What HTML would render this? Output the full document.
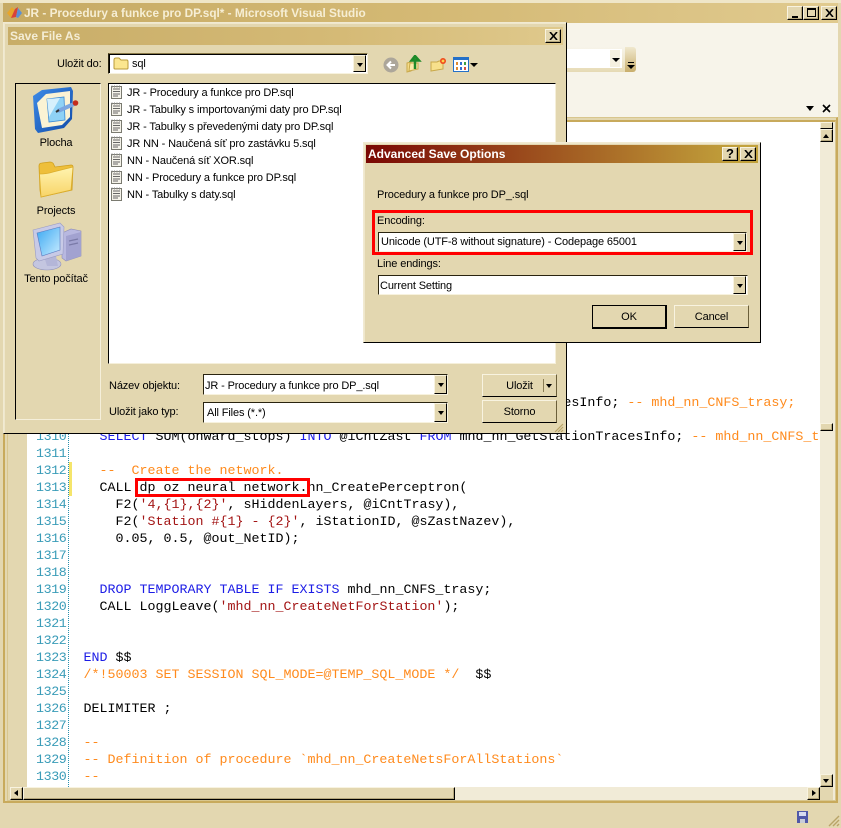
<!DOCTYPE html>
<html><head><meta charset="utf-8"><style>
html,body{margin:0;padding:0;width:841px;height:828px;overflow:hidden;background:#e3d7b0}
div,span,svg{box-sizing:border-box}
.a,.t,.c{position:absolute}
.t{font:11px/16px "Liberation Sans",sans-serif;letter-spacing:-.13px;color:#000;white-space:pre}
.c{font:13.33px/17px "Liberation Mono",monospace;white-space:pre;color:#000;left:83.5px;height:17px;margin-top:1px}
.n{position:absolute;left:36px;font:13.33px/17px "Liberation Mono",monospace;color:#3a9cb8;height:17px;margin-top:1px;letter-spacing:-.4px}
.k{color:#1c1ce6}.o{color:#ff8a1c}.s{color:#a31515}
.btn{position:absolute;background:#e3d7b0;border:1px solid;border-color:#f8f3e0 #000 #000 #f8f3e0;box-shadow:inset -1px -1px 0 #b5a77c}
.combo{position:absolute;background:#fff;border:1px solid;border-color:#2a2410 #f7f2de #f7f2de #2a2410}
.dd{position:absolute;background:#e3d7b0;border:1px solid;border-color:#f8f3e0 #000 #000 #f8f3e0}
.dd:after{content:"";position:absolute;left:3px;top:7px;border:3px solid transparent;border-top:4px solid #000;border-bottom:0}
.pb{position:absolute;background:#e3d7b0;border:1px solid;border-color:#f8f3e0 #6b5f3a #000 #f8f3e0;text-align:center;font:11px/14px "Liberation Sans",sans-serif;letter-spacing:-.13px}
</style></head><body>
<!-- main window -->
<div class="a" style="left:0;top:0;width:841px;height:3px;background:#efe6c8"></div>
<div class="a" style="left:3px;top:3px;width:835px;height:20px;background:linear-gradient(90deg,#c6aa64,#d4b974 50%,#e0ca8f)"></div>
<div class="t" style="left:24px;top:5px;font-size:11.8px;font-weight:bold;color:#f6eed4;letter-spacing:0">JR - Procedury a funkce pro DP.sql* - Microsoft Visual Studio</div>
<svg class="a" style="left:6px;top:6px" width="17" height="14" viewBox="0 0 17 14"><path d="M1 7L6 1L9 4L5 12Z" fill="#e8a52a"/><path d="M5 12L9 3L12 1L10 11Z" fill="#d8433a"/><path d="M10 11L12 2L16 7L12 12Z" fill="#5a8fd6"/></svg>
<div class="btn" style="left:787px;top:6px;width:16px;height:14px"><div class="a" style="left:4px;top:9px;width:6px;height:2px;background:#000"></div></div>
<div class="btn" style="left:803px;top:6px;width:16px;height:14px"><div class="a" style="left:3px;top:1px;width:9px;height:9px;border:1px solid #000;border-top-width:2px"></div></div>
<div class="btn" style="left:821px;top:6px;width:16px;height:14px"><svg class="a" style="left:3px;top:2px" width="9" height="8"><path d="M1 0L8 8M8 0L1 8" stroke="#000" stroke-width="1.6"/></svg></div>
<div class="a" style="left:3px;top:23px;width:835px;height:94px;background:#f7f4ea"></div>
<!-- toolbar remnants -->
<div class="a" style="left:566px;top:47px;width:60px;height:25px;background:linear-gradient(#f7f4ea,#efe7cc 60%,#e6dab4)"></div>
<div class="a" style="left:566px;top:49px;width:56px;height:19px;background:#fff;border:1px solid #fff"></div>
<div class="a" style="left:610px;top:50px;width:11px;height:17px;background:#f5f0e0;border-right:1px solid #fff"></div>
<div class="a" style="left:612px;top:58px;border:4px solid transparent;border-top:4px solid #000;border-bottom:0"></div>
<div class="a" style="left:625px;top:47px;width:11px;height:25px;background:linear-gradient(#f0e8ce,#c9ae6c);border-radius:0 3px 3px 0"></div>
<div class="a" style="left:628px;top:62px;width:6px;height:1px;background:#000"></div>
<div class="a" style="left:627px;top:65px;border:4px solid transparent;border-top:4px solid #000;border-bottom:0"></div>
<div class="a" style="left:806px;top:106px;border:4px solid transparent;border-top:5px solid #000;border-bottom:0"></div>
<svg class="a" style="left:822px;top:104px" width="9" height="9"><path d="M1 1L8 8M8 1L1 8" stroke="#000" stroke-width="1.6"/></svg>
<!-- editor frame -->
<div class="a" style="left:3px;top:117px;width:835px;height:686px;background:#e3d7b0;border:2px solid #c8aa5c;border-top:1px solid #d8c68e;border-left-width:2px"></div>
<div class="a" style="left:7px;top:120px;width:829px;height:681px;background:#e3d7b0;border:1px solid #d8c68e;border-top:2px solid #c8aa5c"></div>
<div class="a" style="left:27px;top:122px;width:793px;height:665px;background:#fff"></div>
<div class="a" style="left:820px;top:122px;width:13px;height:665px;background:#f1ebd7"></div>
<div class="a" style="left:10px;top:787px;width:810px;height:13px;background:#f1ebd7"></div>
<div class="a" style="left:820px;top:787px;width:13px;height:13px;background:#e3d7b0"></div>
<div class="a" style="left:833px;top:122px;width:2px;height:678px;background:#f1ebd7"></div>
<div class="btn" style="left:820px;top:122px;width:13px;height:7px;box-shadow:none"></div>
<div class="btn" style="left:820px;top:129px;width:13px;height:13px"><div class="a" style="left:2px;top:4px;border:3px solid transparent;border-bottom:4px solid #000;border-top:0"></div></div>
<div class="btn" style="left:820px;top:423px;width:13px;height:8px"></div>
<div class="btn" style="left:820px;top:774px;width:13px;height:13px"><div class="a" style="left:2px;top:4px;border:3px solid transparent;border-top:4px solid #000;border-bottom:0"></div></div>
<div class="btn" style="left:10px;top:787px;width:13px;height:13px"><div class="a" style="left:3px;top:2px;border:3px solid transparent;border-right:4px solid #000;border-left:0"></div></div>
<div class="btn" style="left:23px;top:787px;width:432px;height:13px"></div>
<div class="btn" style="left:807px;top:787px;width:13px;height:13px"><div class="a" style="left:4px;top:2px;border:3px solid transparent;border-left:4px solid #000;border-right:0"></div></div>
<!-- gutter -->
<div class="a" style="left:68px;top:122px;width:1px;height:665px;border-left:1px dotted #2b91af"></div>
<div class="a" style="left:69px;top:462px;width:3px;height:34px;background:#f5e56b"></div>
<div class="n" style="top:428px">1310</div><div class="n" style="top:445px">1311</div><div class="n" style="top:462px">1312</div><div class="n" style="top:479px">1313</div><div class="n" style="top:496px">1314</div><div class="n" style="top:513px">1315</div><div class="n" style="top:530px">1316</div><div class="n" style="top:547px">1317</div><div class="n" style="top:564px">1318</div><div class="n" style="top:581px">1319</div><div class="n" style="top:598px">1320</div><div class="n" style="top:615px">1321</div><div class="n" style="top:632px">1322</div><div class="n" style="top:649px">1323</div><div class="n" style="top:666px">1324</div><div class="n" style="top:683px">1325</div><div class="n" style="top:700px">1326</div><div class="n" style="top:717px">1327</div><div class="n" style="top:734px">1328</div><div class="n" style="top:751px">1329</div><div class="n" style="top:768px">1330</div>
<!-- code -->
<div class="c" style="top:394px">  <span class="k">SELECT</span> COUNT(*) <span class="k">INTO</span> @iCntTrasy <span class="k">FROM</span> mhd_nn_GetStationTracesInfo; <span class="o">-- mhd_nn_CNFS_trasy;</span></div>
<div class="c" style="top:428px;width:734px;overflow:hidden">  <span class="k">SELECT</span> SUM(onward_stops) <span class="k">INTO</span> @iCntZast <span class="k">FROM</span> mhd_nn_GetStationTracesInfo; <span class="o">-- mhd_nn_CNFS_trasy;</span></div>
<div class="c o" style="top:462px">  --  Create the network.</div>
<div class="c" style="top:479px">  CALL dp oz neural network.nn_CreatePerceptron(</div>
<div class="c" style="top:496px">    F2(<span class="s">'4,{1},{2}'</span>, sHiddenLayers, @iCntTrasy),</div>
<div class="c" style="top:513px">    F2(<span class="s">'Station #{1} - {2}'</span>, iStationID, @sZastNazev),</div>
<div class="c" style="top:530px">    0.05, 0.5, @out_NetID);</div>
<div class="c" style="top:581px">  <span class="k">DROP TEMPORARY TABLE IF EXISTS</span> mhd_nn_CNFS_trasy;</div>
<div class="c" style="top:598px">  CALL LoggLeave(<span class="s">'mhd_nn_CreateNetForStation'</span>);</div>
<div class="c" style="top:649px"><span class="k">END</span> $$</div>
<div class="c" style="top:666px"><span class="o">/*!50003 SET SESSION SQL_MODE=@TEMP_SQL_MODE */</span>  $$</div>
<div class="c" style="top:700px">DELIMITER ;</div>
<div class="c o" style="top:734px">--</div>
<div class="c o" style="top:751px">-- Definition of procedure `mhd_nn_CreateNetsForAllStations`</div>
<div class="c o" style="top:768px">--</div>
<div class="a" style="left:135px;top:478px;width:175px;height:19px;border:3px solid #f00"></div>
<!-- status bar -->
<svg class="a" style="left:797px;top:811px" width="11" height="12"><rect width="11" height="12" fill="#5058a8"/><rect x="2" y="1" width="7" height="4" fill="#d8dcf0"/><rect x="3" y="8" width="5" height="4" fill="#c8ccd8"/></svg>
<svg class="a" style="left:828px;top:814px" width="12" height="13"><path d="M1 12L11 2M5 12L11 6M9 12L11 10" stroke="#b9a468" stroke-width="1.4"/></svg>
<!-- Save File As dialog -->
<div class="a" style="left:3px;top:22px;width:564px;height:412px;background:#e3d7b0;border:1px solid;border-color:#f1ead2 #000 #000 #f1ead2;box-shadow:inset 1px 1px 0 #efe7cc"></div>
<div class="a" style="left:8px;top:27px;width:555px;height:18px;background:linear-gradient(90deg,#c8ad68,#d5ba76 60%,#dfc98c)"></div>
<div class="t" style="left:10px;top:28px;font-weight:bold;font-size:12px;letter-spacing:0;color:#f4edd6">Save File As</div>
<div class="btn" style="left:545px;top:29px;width:16px;height:14px"><svg class="a" style="left:3px;top:2px" width="9" height="8"><path d="M1 0L8 8M8 0L1 8" stroke="#000" stroke-width="1.6"/></svg></div>
<div class="t" style="left:57px;top:56px">Uložit do:</div>
<div class="combo" style="left:108px;top:53px;width:260px;height:21px;border-top-color:#8a7a48;box-shadow:inset 1px 1px 0 #000"></div>
<div class="dd" style="left:353px;top:55px;width:13px;height:17px"></div>
<svg class="a" style="left:113px;top:57px" width="16" height="13" viewBox="0 0 16 13"><path d="M1 3Q1 1 3 1H6L8 3H14Q15 3 15 5V11Q15 12 14 12H2Q1 12 1 11Z" fill="#fbe68f" stroke="#b89a3a"/></svg>
<div class="t" style="left:132px;top:56px">sql</div>
<svg class="a" style="left:383px;top:57px" width="16" height="16"><circle cx="8" cy="8" r="7.5" fill="#aca69a"/><path d="M12 8H6M8 4.5L4.5 8L8 11.500" stroke="#fff" stroke-width="2" fill="none"/></svg>
<svg class="a" style="left:406px;top:55px" width="16" height="18"><path d="M1 8L5 7V16L1 17Z" fill="#f5dc88" stroke="#c8a84a"/><path d="M4 8H12V14L3 16Z" fill="#fbeaa8" stroke="#c8a84a"/><path d="M9 14V5M5.500 5.500L9 1L13 5.500Z" stroke="#1e8a28" stroke-width="2.500" fill="#28a030"/></svg>
<svg class="a" style="left:430px;top:57px" width="17" height="15"><path d="M1 5H7L9 4H13V12L1 14Z" fill="#f7e08c" stroke="#c8a84a"/><circle cx="13" cy="4" r="3" fill="#f04a1c"/><circle cx="13" cy="4" r="1.400" fill="#fcd44a"/></svg>
<svg class="a" style="left:453px;top:57px" width="16" height="15"><rect x=".5" y=".5" width="15" height="14" fill="#fff" stroke="#2470c8"/><rect width="16" height="3" fill="#2470c8"/><rect x="3" y="5" width="2" height="3" fill="#e08a30"/><rect x="7" y="5" width="2" height="3" fill="#3070d0"/><rect x="11" y="5" width="2" height="3" fill="#40a040"/><rect x="3" y="10" width="2" height="3" fill="#e08a30"/><rect x="7" y="10" width="2" height="3" fill="#3070d0"/><rect x="11" y="10" width="2" height="3" fill="#d05040"/></svg>
<div class="a" style="left:470px;top:63px;border:4px solid transparent;border-top:4px solid #000;border-bottom:0"></div>
<!-- places bar -->
<div class="a" style="left:15px;top:83px;width:86px;height:337px;border:1px solid;border-color:#000 #f5efda #f5efda #000;background:#e3d7b0"></div>
<svg class="a" style="left:0;top:0" width="120" height="280" viewBox="0 0 120 280">
<defs>
<linearGradient id="bl" x1="0" y1="0" x2="1" y2="1"><stop offset="0" stop-color="#3f8ce8"/><stop offset="1" stop-color="#0f4aa8"/></linearGradient>
<linearGradient id="fo" x1="0" y1="0" x2="0" y2="1"><stop offset="0" stop-color="#fff4b0"/><stop offset="1" stop-color="#f8d468"/></linearGradient>
<linearGradient id="sc" x1="0" y1="0" x2="1" y2="1"><stop offset="0" stop-color="#3aa8f2"/><stop offset="1" stop-color="#c8ecff"/></linearGradient>
</defs>
<!-- desktop -->
<path d="M33 96L42 90L71 87L73 91L72 119L64 128L38 133L35 129Z" fill="url(#bl)"/>
<path d="M37 103L46 94L70 91L70 117L62 125L42 128Z" fill="#fbf3d4"/>
<path d="M47 99L64 97L65 120L49 122Z" fill="#8fd2f6" stroke="#3a8ad6" stroke-width=".8"/>
<path d="M47 99L60 98L49 117Z" fill="#d6f0fc"/>
<path d="M58 111L74 104" stroke="#7aa6e0" stroke-width="4"/>
<path d="M56 112L59 110" stroke="#333" stroke-width="2"/>
<circle cx="75.500" cy="103" r="2.800" fill="#c42c1c"/>
<!-- folder -->
<path d="M39 166Q39 163 42 163L50 162Q53 162 54 165L55 167L71 165Q73 165 73 167L72 190L41 197L40 190Z" fill="#eebf3a" stroke="#cf9f1e" stroke-width=".8"/>
<path d="M39.500 174Q47 174 53 172L73 167L71 190L41 197Z" fill="url(#fo)" stroke="#dcae2c" stroke-width=".8"/>
<!-- computer -->
<ellipse cx="47" cy="264" rx="14" ry="6" fill="#c4c6e0" stroke="#8e90b8" stroke-width=".6"/>
<path d="M44 256H56L58 266H47Z" fill="#b4b6d8"/>
<path d="M62 233L71 229L81 231V256L66 261L62 258Z" fill="#b8b8e0" stroke="#8c8cb8" stroke-width=".6"/>
<path d="M66 236L81 232V256L66 261Z" fill="#a2a2d0"/>
<path d="M69 241L78 239M69 245L78 243" stroke="#7a7aa8" stroke-width="1.200"/>
<path d="M33 230L60 223L64 227L63 254L39 261L36 258Z" fill="#c8cae6" stroke="#9a9cc4" stroke-width=".6"/>
<path d="M37 233L60 227L60 250L42 256Z" fill="url(#sc)" stroke="#5a7ac0" stroke-width=".6"/>
</svg>
<div class="t" style="left:15px;top:135px;width:82px;text-align:center">Plocha</div>
<div class="t" style="left:15px;top:203px;width:82px;text-align:center">Projects</div>
<div class="t" style="left:15px;top:271px;width:82px;text-align:center">Tento počítač</div>
<!-- file list -->
<div class="a" style="left:108px;top:83px;width:448px;height:281px;background:#fff;border:1px solid;border-color:#000 #f5efda #f5efda #000;border-top-color:#000"></div>
<svg width="0" height="0" style="position:absolute"><defs><g id="f"><path d="M.5 1.500H10.500V13.500H.5Z" fill="#f5f3ea" stroke="#7a7a70"/><path d="M2 4H9M2 6.500H9M2 9H9M2 11H7" stroke="#666" stroke-width="1"/><path d="M1 0.500V2.500M3.500 0.500V2.500M6 0.500V2.500M8.500 0.500V2.500" stroke="#888"/></g></defs></svg>
<svg class="a" style="left:111px;top:85px" width="12" height="120"><use href="#f"/><use href="#f" y="17"/><use href="#f" y="34"/><use href="#f" y="51"/><use href="#f" y="68"/><use href="#f" y="85"/><use href="#f" y="102"/></svg>
<div class="t" style="left:127px;top:85px">JR - Procedury a funkce pro DP.sql</div>
<div class="t" style="left:127px;top:102px">JR - Tabulky s importovanými daty pro DP.sql</div>
<div class="t" style="left:127px;top:119px">JR - Tabulky s převedenými daty pro DP.sql</div>
<div class="t" style="left:127px;top:136px">JR NN - Naučená síť pro zastávku 5.sql</div>
<div class="t" style="left:127px;top:153px">NN - Naučená síť XOR.sql</div>
<div class="t" style="left:127px;top:170px">NN - Procedury a funkce pro DP.sql</div>
<div class="t" style="left:127px;top:187px">NN - Tabulky s daty.sql</div>
<!-- bottom -->
<div class="t" style="left:109px;top:378px">Název objektu:</div>
<div class="t" style="left:109px;top:404px">Uložit jako typ:</div>
<div class="combo" style="left:203px;top:374px;width:245px;height:21px"></div>
<div class="dd" style="left:434px;top:375px;width:13px;height:19px"></div>
<div class="t" style="left:205px;top:378px">JR - Procedury a funkce pro DP_.sql</div>
<div class="combo" style="left:203px;top:402px;width:245px;height:21px"></div>
<div class="dd" style="left:434px;top:403px;width:13px;height:19px"></div>
<div class="t" style="left:207px;top:405px">All Files (*.*)</div>
<div class="pb" style="left:482px;top:374px;width:75px;height:23px;padding:4px 0 0 0">Uložit</div>
<div class="a" style="left:543px;top:379px;width:1px;height:13px;background:#8a7d55"></div>
<div class="a" style="left:546px;top:384px;border:3px solid transparent;border-top:4px solid #000;border-bottom:0"></div>
<div class="pb" style="left:482px;top:400px;width:75px;height:23px;padding-top:4px">Storno</div>
<svg class="a" style="left:554px;top:423px" width="10" height="9"><path d="M1 9L9 1M4 9L9 4M7 9L9 7" stroke="#b9a468" stroke-width="1.200"/></svg>
<!-- Advanced dialog -->
<div class="a" style="left:363px;top:142px;width:398px;height:201px;background:#e3d7b0;border:1px solid;border-color:#f1ead2 #000 #000 #f1ead2;box-shadow:inset 1px 1px 0 #efe7cc"></div>
<div class="a" style="left:366px;top:145px;width:392px;height:18px;background:linear-gradient(90deg,#7a0804,#9a4a1c 40%,#b07a2c 70%,#c2a23c 95%)"></div>
<div class="t" style="left:368px;top:146px;color:#fff;font-weight:bold;font-size:12px;letter-spacing:0">Advanced Save Options</div>
<div class="btn" style="left:722px;top:147px;width:16px;height:14px"><span class="a" style="left:3px;top:-1px;font:bold 13px/14px 'Liberation Sans',sans-serif">?</span></div>
<div class="btn" style="left:740px;top:147px;width:16px;height:14px"><svg class="a" style="left:3px;top:2px" width="9" height="8"><path d="M1 0L8 8M8 0L1 8" stroke="#000" stroke-width="1.6"/></svg></div>
<div class="t" style="left:377px;top:187px">Procedury a funkce pro DP_.sql</div>
<div class="a" style="left:372px;top:210px;width:381px;height:45px;border:3px solid #f00"></div>
<div class="t" style="left:377px;top:213px">Encoding:</div>
<div class="combo" style="left:378px;top:232px;width:369px;height:20px"></div>
<div class="dd" style="left:733px;top:233px;width:13px;height:18px"></div>
<div class="t" style="left:381px;top:234px">Unicode (UTF-8 without signature) - Codepage 65001</div>
<div class="t" style="left:377px;top:256px">Line endings:</div>
<div class="combo" style="left:378px;top:275px;width:370px;height:20px"></div>
<div class="dd" style="left:733px;top:276px;width:13px;height:18px"></div>
<div class="t" style="left:380px;top:278px">Current Setting</div>
<div class="pb" style="left:592px;top:305px;width:75px;height:24px;padding-top:4px;border:1px solid #000;border-right-width:2px;border-bottom-width:2px">OK</div>
<div class="pb" style="left:674px;top:305px;width:75px;height:23px;padding-top:4px">Cancel</div>
</body></html>
